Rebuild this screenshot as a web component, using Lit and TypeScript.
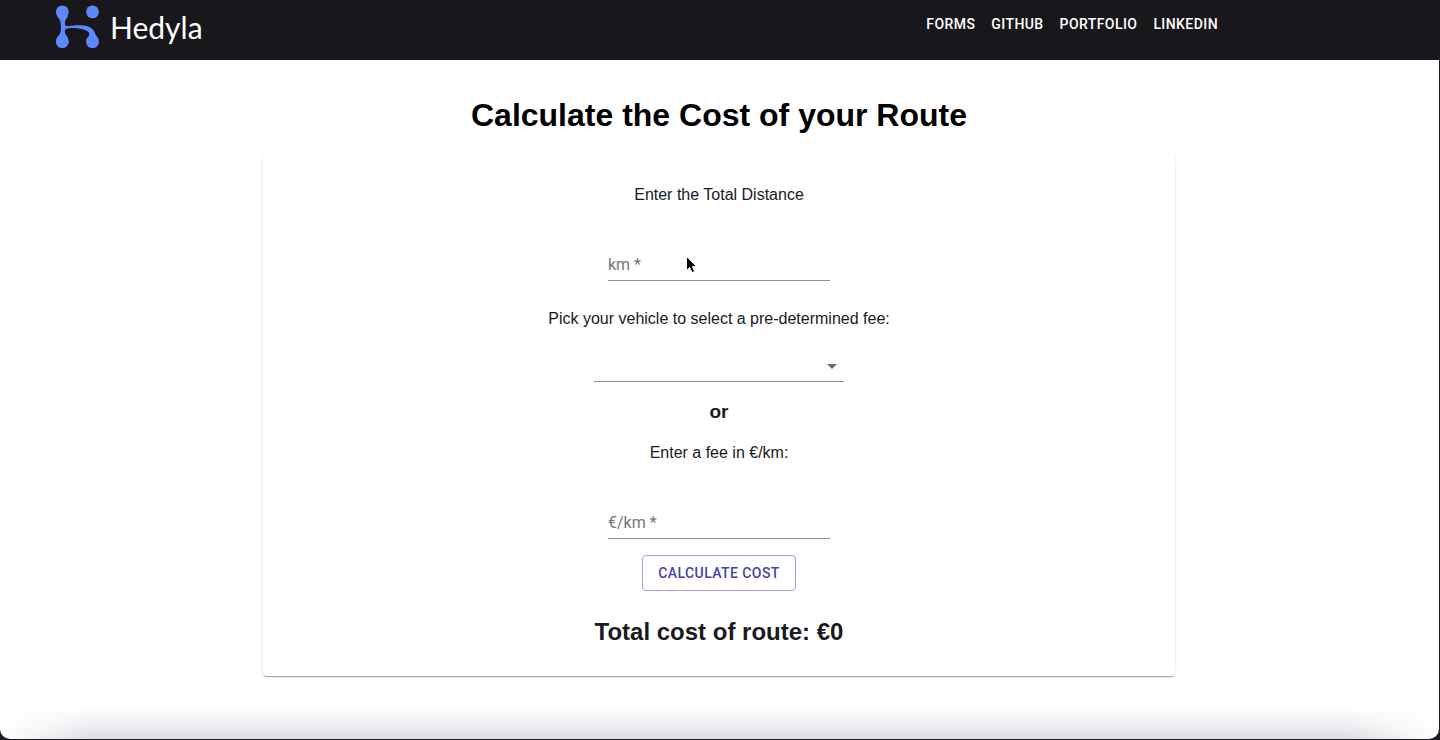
import { LitElement, html, css } from "lit";
import { customElement, state } from "lit/decorators.js";

const NAV_LINKS = ["Forms", "GitHub", "Portfolio", "LinkedIn"];

const VEHICLES = [
  { name: "Motorbike", fee: 0.2 },
  { name: "Car", fee: 0.4 },
  { name: "Truck", fee: 0.9 },
];

@customElement("hedyla-header")
export class HedylaHeader extends LitElement {
  static styles = css`
    :host {
      display: block;
      background: #18171c;
      color: #fff;
    }
    .bar {
      display: flex;
      justify-content: space-between;
      align-items: flex-start;
      box-sizing: border-box;
      height: 60px;
      padding: 4px 213px 0 54px;
    }
    .brand {
      display: flex;
      align-items: flex-start;
      gap: 10px;
      color: inherit;
      text-decoration: none;
    }
    .mark {
      display: block;
      width: 46px;
      height: 46px;
    }
    .name {
      font: 400 30px/46px Lato, sans-serif;
    }
    .links {
      display: flex;
      margin: 0;
      padding: 8px 0 0;
      list-style: none;
    }
    .link {
      display: block;
      padding: 0 8px;
      color: inherit;
      font: 500 14px/24px Roboto, sans-serif;
      letter-spacing: 0.03em;
      text-decoration: none;
      text-transform: uppercase;
    }
  `;

  render() {
    return html`
      <header class="bar">
        <a class="brand" href="#">
          <svg class="mark" viewBox="0 0 46 46" aria-hidden="true">
            <g fill="#5c88fb">
              <circle cx="8.300" cy="7.900" r="6.500" />
              <circle cx="38.500" cy="7.900" r="6.400" />
              <circle cx="8.300" cy="37.700" r="6.500" />
              <circle cx="38.500" cy="37.700" r="6.500" />
              <path
                d="M2.800 11.400C4.400 14.500 6.900 16 6.900 21v4c0 5-2.600 6.500-4.100 9.300h11.500C12.700 31.500 10.600 30 10.800 27c.2-1.800 1.600-2.400 4-2.700 4-.5 8.500-.3 12.500.6 5.200 1.100 8 2.800 8 5.400 0 2-1.400 3.200-2.600 4.700h11.600c-1.300-2-2.300-3.100-3.100-5.400-1.600-4.500-5-7-11.200-8-5.500-.9-11-.1-15 .3-2.600.2-4.200-.2-4.200-2.200 0-3.700 2.200-5.500 3.500-8.300z"
              />
            </g>
          </svg>
          <span class="name">Hedyla</span>
        </a>
        <nav>
          <ul class="links">
            ${NAV_LINKS.map(
              (label) => html`<li><a class="link" href="#">${label}</a></li>`
            )}
          </ul>
        </nav>
      </header>
    `;
  }
}

@customElement("route-form")
export class RouteForm extends LitElement {
  @state() private distance = "";
  @state() private fee = "";
  @state() private total = 0;

  static styles = css`
    :host {
      display: block;
    }
    .card {
      display: flex;
      flex-direction: column;
      align-items: center;
      padding: 31px 16px 31px;
      border-radius: 4px;
      background: #fff;
      box-shadow:
        0 2px 1px -1px rgba(0, 0, 0, 0.2),
        0 1px 1px rgba(0, 0, 0, 0.14),
        0 1px 3px rgba(0, 0, 0, 0.12);
      color: #1a191e;
      font-size: 16px;
      line-height: 20px;
      text-align: center;
    }
    .field {
      display: grid;
      position: relative;
      width: 222px;
      max-width: 100%;
      margin: 44px 0 28px;
    }
    .field.fee {
      margin-bottom: 16px;
    }
    .hint,
    .input {
      grid-area: 1 / 1;
      font: 400 16px/20px Roboto, sans-serif;
    }
    .hint {
      align-self: center;
      justify-self: start;
      color: #757479;
      pointer-events: none;
    }
    .input {
      box-sizing: border-box;
      width: 100%;
      height: 32px;
      padding: 6px 0;
      border: 0;
      border-bottom: 1px solid #8f8d95;
      outline: 0;
      background: transparent;
      color: inherit;
    }
    .pointer {
      position: absolute;
      top: 6px;
      left: 77px;
      width: 14px;
      height: 20px;
      pointer-events: none;
    }
    .picker {
      display: grid;
      width: 250px;
      max-width: 100%;
      margin: 21px 0 20px;
    }
    .select {
      grid-area: 1 / 1;
      width: 100%;
      height: 32px;
      padding: 0 24px 0 0;
      border: 0;
      border-bottom: 1px solid #8f8d95;
      border-radius: 0;
      outline: 0;
      appearance: none;
      background: transparent;
      color: inherit;
      font: 400 16px/20px Roboto, sans-serif;
    }
    .arrow {
      grid-area: 1 / 1;
      align-self: center;
      justify-self: end;
      width: 24px;
      height: 24px;
      fill: #6f6e73;
      pointer-events: none;
    }
    .or {
      margin: 0 0 21px;
      font-size: 19px;
      line-height: 20px;
    }
    .submit {
      height: 36px;
      padding: 0 15px;
      border: 1px solid #a0a2db;
      border-radius: 4px;
      background: #fff;
      color: #3f45a8;
      font: 500 14px/24px Roboto, sans-serif;
      letter-spacing: 0.03em;
      text-transform: uppercase;
      cursor: pointer;
    }
    .total {
      margin: 28px 0 0;
      font-size: 24px;
      line-height: 26px;
    }
  `;

  private onVehicle(e: Event) {
    this.fee = (e.target as HTMLSelectElement).value;
  }

  private onSubmit(e: Event) {
    e.preventDefault();
    this.total = Number(this.distance) * Number(this.fee) || 0;
  }

  render() {
    return html`
      <form class="card" @submit=${this.onSubmit}>
        <div>Enter the Total Distance</div>
        <div class="field">
          <label class="hint" for="distance" ?hidden=${this.distance !== ""}>km *</label>
          <input
            class="input"
            id="distance"
            required
            inputmode="decimal"
            .value=${this.distance}
            @input=${(e: Event) => (this.distance = (e.target as HTMLInputElement).value)}
          />
          <svg class="pointer" viewBox="0 0 14 20" aria-hidden="true">
            <path
              d="M1.500 1.500v14l3.200-2.900 2.300 5 2.600-1.100-2.200-4.900h4.200z"
              fill="#000"
              stroke="#fff"
              stroke-width="1"
            />
          </svg>
        </div>
        <label for="vehicle">Pick your vehicle to select a pre-determined fee:</label>
        <div class="picker">
          <select class="select" id="vehicle" @change=${this.onVehicle}>
            <option value=""></option>
            ${VEHICLES.map((v) => html`<option value=${v.fee}>${v.name}</option>`)}
          </select>
          <svg class="arrow" viewBox="0 0 24 24" aria-hidden="true"><path d="M7 10l5 5 5-5z" /></svg>
        </div>
        <h3 class="or">or</h3>
        <div>Enter a fee in €/km:</div>
        <div class="field fee">
          <label class="hint" for="fee" ?hidden=${this.fee !== ""}>€/km *</label>
          <input
            class="input"
            id="fee"
            required
            inputmode="decimal"
            .value=${this.fee}
            @input=${(e: Event) => (this.fee = (e.target as HTMLInputElement).value)}
          />
        </div>
        <button class="submit" type="submit">Calculate Cost</button>
        <h2 class="total">Total cost of route: €${this.total}</h2>
      </form>
    `;
  }
}

@customElement("app-root")
export class AppRoot extends LitElement {
  static styles = css`
    :host {
      display: flex;
      box-sizing: border-box;
      min-height: 100vh;
      padding: 0 1px 1px 0;
      background: #1c1b20;
      font-family: "Liberation Sans", Arial, sans-serif;
    }
    .window {
      display: flex;
      flex: 1;
      flex-direction: column;
      overflow: hidden;
      border-radius: 0 0 10px 10px;
      background: #fff;
    }
    .content {
      box-sizing: border-box;
      width: 100%;
      max-width: 961px;
      margin: 0 auto;
      padding: 36px 25px 32px 24px;
    }
    .title {
      margin: 0 0 20px;
      color: #000;
      font-size: 32px;
      line-height: 38px;
      text-align: center;
    }
    .shade {
      height: 28px;
      margin-top: auto;
      background: linear-gradient(#fbfafb, #f1eff3 50%, #dfdde2);
      mask-image: linear-gradient(90deg, transparent, #000 90px, #000 calc(100% - 90px), transparent);
    }
  `;

  render() {
    return html`
      <div class="window">
        <hedyla-header></hedyla-header>
        <main class="content">
          <h1 class="title">Calculate the Cost of your Route</h1>
          <route-form></route-form>
        </main>
        <div class="shade"></div>
      </div>
    `;
  }
}
